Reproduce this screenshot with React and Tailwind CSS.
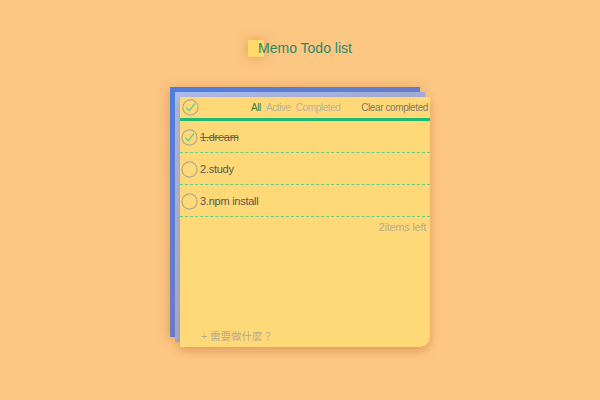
import React from 'react';

const todos = [
  { id: 1, text: '1.dream', done: true },
  { id: 2, text: '2.study', done: false },
  { id: 3, text: '3.npm install', done: false },
];

const CheckCircle = ({ checked }) => (
  <svg width="17" height="17" viewBox="0 0 17 17" className="shrink-0">
    <circle cx="8.5" cy="8.5" r="7.6" fill="none" stroke="#b3a98c" strokeWidth="1.2" />
    {checked && (
      <path d="M4.6 8.9 L7.4 11.7 L12.6 4.9" fill="none" stroke="#4fd39a" strokeWidth="1.3" strokeLinecap="round" strokeLinejoin="round" />
    )}
  </svg>
);

const App = () => {
  return (
    <div className="w-[600px] h-[400px] bg-[#fcc683] flex flex-col items-center font-['Liberation_Sans','Noto_Sans_CJK_TC',sans-serif]">
      <div className="mt-[39px] flex items-center h-[18px]">
        <div className="w-[16px] h-[17px] bg-[#ffd96e] shadow-[0_0_12px_rgba(200,120,40,0.5)] -mr-[6px]" />
        <span className="relative text-[14px] leading-none text-[#2b8a68]">Memo Todo list</span>
      </div>

      <div className="relative w-[260px] h-[260px] mt-[30px]">
        <div className="absolute left-0 top-0 w-[250px] h-[250px] bg-linear-to-br from-[#4c7fe0] to-[#7f7ab2] shadow-[0_2px_12px_rgba(190,100,40,0.45)]" />
        <div className="absolute left-[5px] top-[5px] w-[250px] h-[250px] bg-linear-to-br from-[#aabcee] to-[#999cc8]" />
        <div className="absolute left-[10px] top-[10px] w-[250px] h-[250px] bg-[#ffd978] rounded-br-[10px] shadow-[0_4px_10px_rgba(190,100,40,0.4)] flex flex-col">
          <div className="h-[24px] flex items-center pl-[2px] pr-[2px] border-b-[3px] border-[#1dbb72] tracking-[-0.4px]">
            <CheckCircle checked />
            <div className="ml-[52px] flex gap-[5px] text-[10px]">
              <span className="text-[#3f7a3a]">All</span>
              <span className="text-[#b8b29c]">Active</span>
              <span className="text-[#b8b29c]">Completed</span>
            </div>
            <span className="ml-auto text-[10px] text-[#7d7868]">Clear completed</span>
          </div>

          {todos.map((t) => (
            <div key={t.id} className="h-[32px] flex items-center pl-[1px] pt-[1px] border-b border-dashed border-[#5ad282]">
              <CheckCircle checked={t.done} />
              <span className={`ml-[2px] text-[11px] tracking-[-0.25px] ${t.done ? 'line-through text-[#6a6456]' : 'text-[#5a574d]'}`}>{t.text}</span>
            </div>
          ))}

          <div className="mt-[2px] pr-[4px] text-right text-[11px] tracking-[-0.25px] text-[#b5ab90]">2items left</div>

          <div className="mt-auto pb-[2px] pl-[21px] text-[10.5px] text-[#b5ab90]">+ 需要做什麼？</div>
        </div>
      </div>
    </div>
  );
};

export default App;
